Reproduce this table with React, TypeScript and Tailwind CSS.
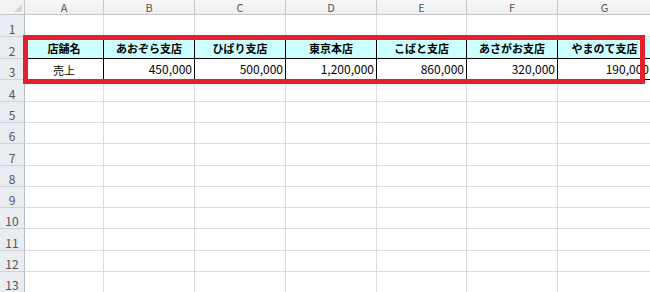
import React from 'react';

const cols = ['A', 'B', 'C', 'D', 'E', 'F', 'G'];
const widths = [79, 91, 91, 91, 90, 91, 94];
const rowHeights = [22, 22, 21, 22, 21, 21, 22, 21, 21, 21, 22, 21, 21];

const branches = ['店舗名', 'あおぞら支店', 'ひばり支店', '東京本店', 'こばと支店', 'あさがお支店', 'やまのて支店'];
const sales = ['売上', '450,000', '500,000', '1,200,000', '860,000', '320,000', '190,000'];

const font = { fontFamily: '"Noto Sans CJK JP", "Liberation Sans", sans-serif' };

function Cell({ row, col }: { row: number; col: number }) {
  const inTable = row === 2 || row === 3;
  if (!inTable) {
    return <div className="border-r border-b border-[#dadcdd] bg-white" />;
  }
  if (row === 2) {
    return (
      <div className="flex items-end justify-center border-r border-b border-black bg-[#ccffff] pb-[2px] text-[11px] font-bold text-black">
        {branches[col]}
      </div>
    );
  }
  return (
    <div
      className={
        'flex items-end border-r border-b border-black bg-white pb-[1px] text-black ' +
        (col === 0 ? 'justify-center text-[11px]' : 'justify-end pr-[2px] text-[12px]')
      }
    >
      {sales[col]}
    </div>
  );
}

export default function App() {
  const template = `25px ${widths.map((w) => w + 'px').join(' ')}`;
  return (
    <div className="relative h-[292px] w-[650px] overflow-hidden bg-white" style={font}>
      {/* column letters */}
      <div className="grid h-[15px]" style={{ gridTemplateColumns: template }}>
        <div className="relative border-r border-b border-[#c6c6c6] bg-[#f2f2f2]">
          <svg className="absolute right-[2px] bottom-[2px]" width="8" height="8" viewBox="0 0 8 8">
            <polygon points="8,0 8,8 0,8" fill="#d6d6d6" />
          </svg>
        </div>
        {cols.map((c) => (
          <div
            key={c}
            className="flex items-center justify-center border-r border-b border-[#c6c6c6] bg-gradient-to-b from-[#f7f7f7] to-[#eeeeee] text-[11px] leading-[14px] text-[#555]"
          >
            {c}
          </div>
        ))}
      </div>

      {/* rows */}
      {rowHeights.map((h, i) => {
        const row = i + 1;
        return (
          <div key={row} className="grid" style={{ gridTemplateColumns: template, height: h }}>
            <div className="flex items-end justify-center border-r border-b border-r-[#b6bcc6] border-b-[#cfd3d9] bg-[#e9ecf1] pb-[1px] text-[12px] leading-none text-[#555]">
              {row}
            </div>
            {cols.map((c, j) => (
              <Cell key={c} row={row} col={j} />
            ))}
          </div>
        );
      })}

      {/* highlight frame around the sales table */}
      <div className="pointer-events-none absolute top-[35px] left-[23px] h-[49px] w-[622px] border-[5px] border-[#e3202b]" />
    </div>
  );
}
